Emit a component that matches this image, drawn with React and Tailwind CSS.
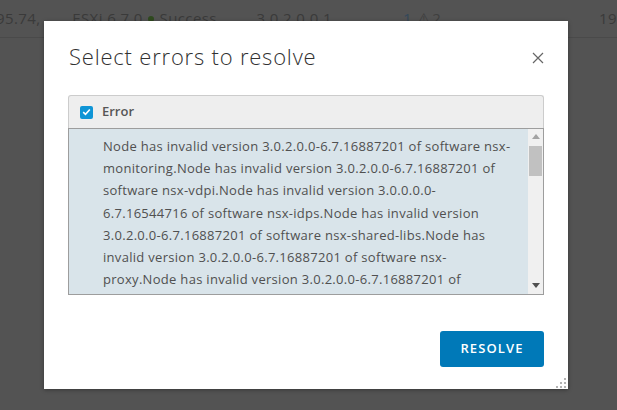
import React from "react";

const lines = [
  "Node has invalid version 3.0.2.0.0-6.7.16887201 of software nsx-",
  "monitoring.Node has invalid version 3.0.2.0.0-6.7.16887201 of",
  "software nsx-vdpi.Node has invalid version 3.0.0.0.0-",
  "6.7.16544716 of software nsx-idps.Node has invalid version",
  "3.0.2.0.0-6.7.16887201 of software nsx-shared-libs.Node has",
  "invalid version 3.0.2.0.0-6.7.16887201 of software nsx-",
  "proxy.Node has invalid version 3.0.2.0.0-6.7.16887201 of",
];

function ResizeHandle() {
  const dots = [
    [8, 0],
    [4, 4], [8, 4],
    [0, 8], [4, 8], [8, 8],
  ];
  return (
    <svg width="10" height="10" viewBox="0 0 10 10" className="absolute right-[2px] bottom-[1px]">
      {dots.map(([x, y], i) => (
        <rect key={i} x={x} y={y} width="2" height="2" fill="#b3b3b3" />
      ))}
    </svg>
  );
}

export default function App() {
  return (
    <div className="relative w-[617px] h-[410px] overflow-hidden bg-[#535353]" style={{ fontFamily: '"Open Sans", "Liberation Sans", sans-serif' }}>
      {/* background page row (dimmed) */}
      <div className="flex items-center h-[38px] border-b border-[#4a4a4a] text-[15px] tracking-[0.4px] text-[#3a3a3a] whitespace-nowrap">
        <div className="w-[77px] -ml-[4px]">95.74, ...</div>
        <div className="w-[76px]">ESXi 6.7.0</div>
        <div className="w-[110px] flex items-center gap-[6px]">
          <span className="inline-block w-[6px] h-[6px] rounded-full bg-[#2f4a1f]" />
          <span>Success</span>
        </div>
        <div className="w-[148px]">3.0.2.0.0.1</div>
        <div className="w-[14px] text-[#33485a]">1</div>
        <div className="w-[184px] flex items-center gap-[2px] text-[#3f3f3f]">
          <span>⚠</span><span>2</span>
        </div>
        <div>19</div>
      </div>

      {/* modal */}
      <div className="absolute left-[44px] top-[21px] w-[524px] h-[368px] bg-white shadow-[0_1px_4px_rgba(0,0,0,0.35)] px-[24px] flex flex-col">
        <div className="flex items-start justify-between pt-[20px]">
          <div className="text-[22px] font-light text-[#313131] leading-[30px] ml-[1px] tracking-[0.8px]">Select errors to resolve</div>
          <svg width="12" height="12" viewBox="0 0 12 12" className="mt-[11px] mr-[0px]">
            <path d="M1 1 L11 11 M11 1 L1 11" stroke="#666" strokeWidth="1.2" fill="none" />
          </svg>
        </div>

        {/* datagrid */}
        <div className="mt-[24px] flex flex-col w-[476px]">
          <div className="h-[33px] flex items-center border border-b-0 border-[#cccccc] rounded-t-[3px] bg-[#eeeeee]">
            <div className="w-[33px] flex justify-center pl-[2px]">
              <div className="w-[13px] h-[13px] rounded-[2px] bg-[#0f95d6] flex items-center justify-center">
                <svg width="9" height="8" viewBox="0 0 9 8">
                  <path d="M1.2 4.2 L3.5 6.3 L7.8 1.5" stroke="white" strokeWidth="1.6" fill="none" />
                </svg>
              </div>
            </div>
            <div className="text-[13px] font-semibold text-[#565656]">Error</div>
          </div>
          <div className="h-[167px] flex border border-[#9d9d9d] bg-[#d9e4ea] overflow-hidden">
            <div className="flex-1 pl-[34px] pt-[6px] text-[13px] leading-[22.2px] tracking-[0.3px] text-[#505050] whitespace-nowrap overflow-hidden">
              {lines.map((l, i) => (
                <div key={i}>{l}</div>
              ))}
            </div>
            <div className="w-[15px] bg-[#f0f0f0] flex flex-col items-center justify-between">
              <div className="flex flex-col items-center w-full">
                <svg width="8" height="5" viewBox="0 0 8 5" className="mt-[5px]">
                  <path d="M0 5 L4 0 L8 5 Z" fill="#a3a3a3" />
                </svg>
                <div className="mt-[7px] w-[13px] h-[30px] bg-[#c1c1c1]" />
              </div>
              <svg width="8" height="5" viewBox="0 0 8 5" className="mb-[6px]">
                <path d="M0 0 L8 0 L4 5 Z" fill="#505050" />
              </svg>
            </div>
          </div>
        </div>

        {/* footer */}
        <div className="flex justify-end mt-[36px]">
          <button className="w-[104px] h-[36px] rounded-[3px] bg-[#0079b8] text-white text-[13px] font-semibold tracking-[1.1px]">
            RESOLVE
          </button>
        </div>
        <ResizeHandle />
      </div>
    </div>
  );
}
